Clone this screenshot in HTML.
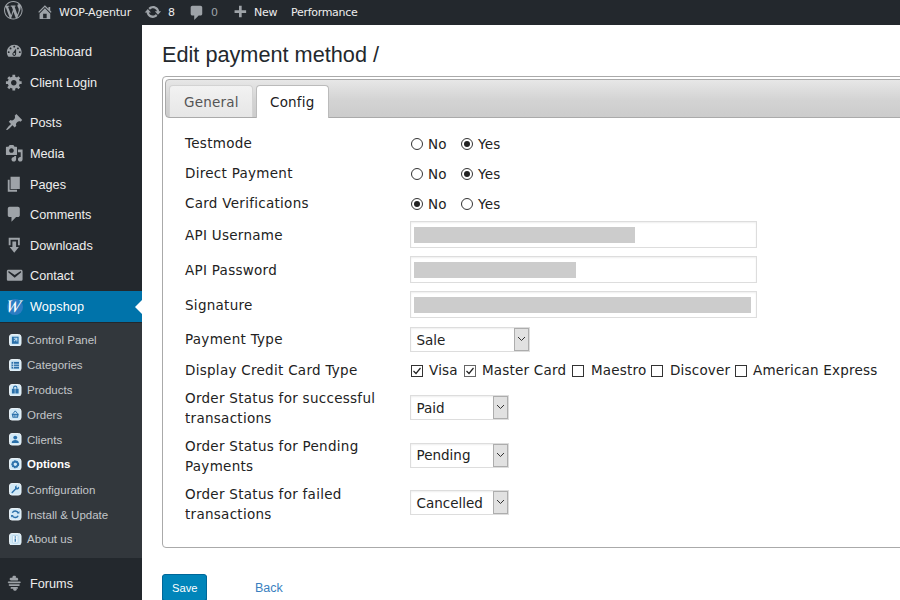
<!DOCTYPE html>
<html><head><meta charset="utf-8">
<style>
*{box-sizing:border-box;margin:0;padding:0}
html,body{width:900px;height:600px;overflow:hidden;background:#fff;font-family:"Liberation Sans",sans-serif;}
#bar{position:absolute;left:0;top:0;width:900px;height:25px;background:#23282d;color:#eee;font-family:"DejaVu Sans","Liberation Sans",sans-serif;font-size:11px;}
#bar span.t{position:absolute;top:6px;line-height:14px;white-space:nowrap;letter-spacing:-0.3px}
#bar svg{position:absolute}
#side{position:absolute;left:0;top:25px;width:142px;height:575px;background:#23282d;color:#eee;}
.mi{position:absolute;left:0;width:142px;height:31px;font-size:12.7px;color:#eee;}
.mi .l{position:absolute;left:30px;top:7px;line-height:16px;white-space:nowrap}
.mi svg{position:absolute;left:4.8px;top:5px;width:18.5px;height:18.5px;fill:#9ea3a8}
.mi.act{background:#0073aa;color:#fff}
.mi .wc{position:absolute;left:6.500px;top:7.500px;width:16px;height:16px;border-radius:50%;background:#2c7cc2}
.mi .w{position:absolute;left:5.500px;top:5px;font-family:"Liberation Serif",serif;font-style:italic;font-weight:normal;font-size:17.500px;line-height:20px;color:#fff;transform:skewX(-10deg)}
.mi.act:after{content:"";position:absolute;right:0;top:9px;border:7px solid transparent;border-right-color:#fff;border-left:0;}
#sub{position:absolute;left:0;top:298px;width:142px;height:235px;background:#32373c}
.si{position:absolute;left:0;width:142px;height:25px;font-size:11.5px;color:#c3c6c9}
.si .l{position:absolute;left:27px;top:5px;line-height:14px;white-space:nowrap}
.si .ic{position:absolute;left:9px;top:5.500px;width:12.500px;height:12.500px}
.si.cur{color:#fff;font-weight:bold}
#main{position:absolute;left:142px;top:25px;width:758px;height:574px;background:#fff}
h1{position:absolute;left:162px;top:41px;font-size:21.7px;font-weight:normal;color:#23282d;line-height:28px;white-space:nowrap}
#panel{position:absolute;left:162px;top:76px;width:760px;height:472px;border:1px solid #aaa;border-radius:4px;background:#fff}
#tabnav{position:absolute;left:2px;top:2px;width:760px;height:39px;border:1px solid #aaa;border-radius:4px;background:linear-gradient(#e7e7e7,#d3d3d3 55%,#cccccc)}
.tab{position:absolute;top:5px;height:32px;letter-spacing:.2px;border:1px solid #d3d3d3;border-bottom:0;border-radius:4px 4px 0 0;font-family:"DejaVu Sans",sans-serif;font-size:13.5px;color:#555;background:linear-gradient(#f2f2f2,#e6e6e6);}
.tab span{position:absolute;top:8px;line-height:17px;white-space:nowrap}
.tab.on{background:#fff;border-color:#bbb;color:#212121;height:33px}
.row{position:absolute;left:185px;letter-spacing:.28px;font-family:"DejaVu Sans",sans-serif;font-size:13.5px;color:#222;line-height:20px;white-space:nowrap}
.v{position:absolute;letter-spacing:.2px;font-family:"DejaVu Sans",sans-serif;font-size:13.5px;color:#222;line-height:20px;white-space:nowrap}
.rad{position:absolute;width:12px;height:12px;border:1px solid #333;border-radius:50%;background:#fff}
.rad.on:after{content:"";position:absolute;left:2px;top:2px;width:6px;height:6px;border-radius:50%;background:#222}
.inp{position:absolute;left:410px;width:347px;height:27px;border:1px solid #ddd;background:#fff;box-shadow:inset 0 1px 2px rgba(0,0,0,.07)}
.inp i{position:absolute;left:3px;top:5px;height:16px;background:#cccccc}
.sel{position:absolute;left:410px;height:25px;border:1px solid #ddd;background:#fff;box-shadow:inset 0 1px 2px rgba(0,0,0,.07)}
.sel span{position:absolute;left:5.500px;top:1.500px;font-family:"DejaVu Sans",sans-serif;font-size:13.5px;color:#222;line-height:20px}
.sel b{position:absolute;right:0;top:0;width:15px;height:23px;border:1px solid #adadad;background:#e1e1e1}
.sel b svg{position:absolute;left:2px;top:7px}
.cb{position:absolute;width:12px;height:12px;border:1px solid #333;background:#fff}
.cb svg{position:absolute;left:0;top:0}
#save{position:absolute;left:162px;top:574px;width:45px;height:27px;background:#0085ba;border:1px solid #006799;border-radius:3px;color:#fff;font-size:11.200px;box-shadow:0 1px 0 #006799}
#save span{position:absolute;left:9px;top:5.500px;line-height:14px}
#back{position:absolute;left:255px;top:580.700px;font-size:12.5px;color:#3a7fc0;line-height:14px}
</style></head><body>
<div id="main"></div>
<div id="bar">
<svg viewBox="0 0 20 20" style="left:4px;top:1.2px;width:18.6px;height:18.6px;fill:#9ea3a8"><path d="M20 10c0-5.510-4.490-10-10-10C4.480 0 0 4.490 0 10c0 5.520 4.480 10 10 10 5.510 0 10-4.480 10-10zM7.780 15.370L4.370 6.220c.55-.02 1.170-.08 1.170-.08.5-.06.44-1.130-.06-1.110 0 0-1.450.11-2.370.11-.18 0-.37 0-.58-.01C4.120 2.690 6.870 1.110 10 1.110c2.330 0 4.450.87 6.050 2.340-.68-.11-1.650.39-1.650 1.580 0 .74.450 1.360.9 2.100.35.61.55 1.360.55 2.460 0 1.490-1.400 5-1.400 5l-3.030-8.370c.54-.02.82-.17.82-.17.5-.05.44-1.250-.06-1.220 0 0-1.440.12-2.380.12-.87 0-2.330-.12-2.330-.12-.5-.03-.56 1.200-.06 1.220l.92.080 1.260 3.410zM17.410 10c.24-.64.740-1.870.43-4.250.7 1.290 1.050 2.710 1.050 4.250 0 3.290-1.730 6.240-4.400 7.780.97-2.590 1.940-5.200 2.920-7.780zM6.100 18.090C3.120 16.650 1.110 13.530 1.110 10c0-1.300.23-2.480.72-3.590C3.250 10.300 4.670 14.200 6.100 18.090zm4.030-6.630l2.580 6.980c-.86.290-1.760.450-2.710.450-.79 0-1.570-.11-2.290-.33.810-2.380 1.620-4.740 2.420-7.100z"/></svg><svg viewBox="0 0 20 20" style="left:35.8px;top:2.5px;width:17.8px;height:17.8px;fill:#9ea3a8"><path d="M16 8.500l1.530 1.530-1.060 1.060L10 4.620l-6.470 6.470-1.060-1.060L10 2.500l4 4v-2h2v4zm-6-2.460l6 5.990V18H4v-5.970zM12 17v-5H8v5h4z"/></svg><svg viewBox="0 0 20 20" style="left:144px;top:2.5px;width:17.8px;height:17.8px;fill:#9ea3a8"><path d="M10.200 3.280c3.530 0 6.430 2.610 6.920 6h2.080l-3.500 4-3.500-4h2.320c-.45-1.970-2.210-3.450-4.320-3.450-1.450 0-2.730.71-3.540 1.780L4.950 5.660C6.230 4.200 8.110 3.280 10.200 3.280zm-.4 13.440c-3.520 0-6.430-2.610-6.920-6H.8l3.500-4c1.170 1.330 2.330 2.670 3.500 4H5.480c.45 1.970 2.210 3.450 4.320 3.450 1.450 0 2.730-.71 3.540-1.780l1.710 1.950c-1.280 1.460-3.150 2.380-5.250 2.380z"/></svg><svg viewBox="0 0 20 20" style="left:188px;top:3.5px;width:17.8px;height:17.8px;fill:#9ea3a8"><path d="M5 2h9c1.100 0 2 .9 2 2v7c0 1.100-.9 2-2 2h-2l-5 5v-5H5c-1.100 0-2-.9-2-2V4c0-1.100.9-2 2-2z"/></svg><svg viewBox="0 0 20 20" style="left:231px;top:4px;width:17.8px;height:17.8px;fill:#9ea3a8"><path d="M17 7v3h-5v5H9v-5H4V7h5V2h3v5h5z"/></svg>
<span class="t" style="left:59px;letter-spacing:-.15px">WOP-Agentur</span>
<span class="t" style="left:168px">8</span>
<span class="t" style="left:211px;color:#9ea3a8">0</span>
<span class="t" style="left:254px">New</span>
<span class="t" style="left:291px">Performance</span>
</div>
<div id="side">
<div class="mi" style="top:12px"><svg viewBox="0 0 20 20"><path d="M3.76 16h12.48c1.1-1.37 1.76-3.11 1.76-5 0-4.42-3.58-8-8-8s-8 3.58-8 8c0 1.89.66 3.63 1.76 5zM10 4c.55 0 1 .45 1 1s-.45 1-1 1-1-.45-1-1 .45-1 1-1zM6 6c.55 0 1 .45 1 1s-.45 1-1 1-1-.45-1-1 .45-1 1-1zm8 0c.55 0 1 .45 1 1s-.45 1-1 1-1-.45-1-1 .45-1 1-1zm-5.37 5.55L12 7v6c0 1.1-.9 2-2 2s-2-.9-2-2c0-.57.24-1.08.63-1.450zM4 10c.55 0 1 .45 1 1s-.45 1-1 1-1-.45-1-1 .45-1 1-1zm12 0c.55 0 1 .45 1 1s-.45 1-1 1-1-.45-1-1 .45-1 1-1zm-5 3c0-.55-.45-1-1-1s-1 .45-1 1 .45 1 1 1 1-.45 1-1z"/></svg><span class="l">Dashboard</span></div>
<div class="mi" style="top:43px"><svg viewBox="0 0 20 20"><path d="M18 12h-2.18c-.17.7-.44 1.35-.81 1.93l1.54 1.54-2.1 2.1-1.54-1.54c-.58.36-1.23.63-1.91.79V19H8v-2.18c-.68-.16-1.33-.43-1.91-.79l-1.54 1.54-2.12-2.12 1.54-1.54c-.36-.58-.63-1.23-.79-1.91H1V9.03h2.17c.16-.7.44-1.35.8-1.94L2.43 5.55l2.1-2.1 1.54 1.54c.58-.37 1.24-.64 1.93-.81V2h3v2.180c.68.16 1.33.43 1.91.79l1.54-1.54 2.12 2.12-1.54 1.54c.36.59.64 1.24.8 1.94H18V12zm-8.5 1.500c1.660 0 3-1.340 3-3s-1.340-3-3-3-3 1.340-3 3 1.340 3 3 3z"/></svg><span class="l">Client Login</span></div>
<div class="mi" style="top:83px"><svg viewBox="0 0 20 20"><path d="M10.44 3.02l1.82-1.82 6.36 6.35-1.83 1.82c-1.05-.68-2.48-.57-3.41.36l-.75.75c-.92.93-1.04 2.35-.35 3.41l-1.83 1.82-2.41-2.41-2.8 2.790c-.42.42-3.38 2.71-3.8 2.290s1.860-3.390 2.280-3.810l2.790-2.790L4.100 9.360l1.830-1.820c1.050.69 2.480.57 3.400-.36l.75-.75c.93-.92 1.050-2.350.36-3.410z"/></svg><span class="l">Posts</span></div>
<div class="mi" style="top:114px"><svg viewBox="0 0 20 20"><path d="M13 11V4c0-.55-.45-1-1-1h-1.670L9 1H5L3.670 3H2c-.55 0-1 .45-1 1v7c0 .55.45 1 1 1h10c.55 0 1-.45 1-1zM7 4.500c1.380 0 2.500 1.120 2.500 2.500S8.380 9.500 7 9.500 4.500 8.380 4.500 7 5.620 4.500 7 4.500zM14 6h5v10.500c0 1.380-1.120 2.500-2.500 2.500S14 17.880 14 16.500s1.120-2.500 2.500-2.500c.17 0 .34.020.5.050V9h-3V6zm-4 8.050V13h2v3.500c0 1.380-1.120 2.500-2.500 2.500S7 17.880 7 16.500 8.120 14 9.500 14c.17 0 .34.020.5.050z"/></svg><span class="l">Media</span></div>
<div class="mi" style="top:145px"><svg viewBox="0 0 20 20"><path d="M6 15V2h10v13H6zm-1 1h8v2H3V5h2v11z"/></svg><span class="l">Pages</span></div>
<div class="mi" style="top:175px"><svg viewBox="0 0 20 20"><path d="M5 2h9c1.100 0 2 .9 2 2v7c0 1.100-.9 2-2 2h-2l-5 5v-5H5c-1.100 0-2-.9-2-2V4c0-1.100.9-2 2-2z"/></svg><span class="l">Comments</span></div>
<div class="mi" style="top:206px"><svg viewBox="0 0 20 20"><path d="M14.010 4v6h2V2H4v8h2.010V4h8zm-2 2v6h3l-5 6-5-6h3V6h4z"/></svg><span class="l">Downloads</span></div>
<div class="mi" style="top:236px"><svg viewBox="0 0 20 20"><path d="M3.870 4h13.250C18.370 4 19 4.590 19 5.790v8.420c0 1.190-.63 1.790-1.880 1.790H3.870c-1.250 0-1.880-.6-1.880-1.790V5.790c0-1.200.63-1.790 1.880-1.790zm6.620 8.600l6.740-5.530c.24-.2.430-.66.130-1.070-.29-.41-.82-.42-1.170-.17l-5.700 3.860L4.800 5.830c-.35-.25-.88-.24-1.170.17-.3.410-.11.870.13 1.070l6.730 5.530z"/></svg><span class="l">Contact</span></div>
<div class="mi act" style="top:266px"><i class="wc"></i><span class="w">W</span><span class="l" style="top:8px;letter-spacing:.12px">Wopshop</span></div>
<div id="sub">
<div class="si" style="top:5px"><svg class="ic" viewBox="0 0 13 13"><rect x=".5" y=".5" width="12" height="12" rx="2.6" fill="#d2e9f6" stroke="#eef7fc"/><rect x="3" y="2.8" width="7" height="7.4" fill="#2a70aa"/><path d="M5 4.5h3.200v3.200M8 4.700L5.200 7.500" stroke="#bcdcf0" stroke-width="1.100" fill="none"/></svg><span class="l">Control Panel</span></div>
<div class="si" style="top:30px"><svg class="ic" viewBox="0 0 13 13"><rect x=".5" y=".5" width="12" height="12" rx="2.6" fill="#d2e9f6" stroke="#eef7fc"/><rect x="2.600" y="3" width="7.800" height="7" fill="#2a70aa"/><path d="M2.600 5.400h7.800M2.600 7.700h7.800M4.700 3v7" stroke="#d2e9f6" stroke-width=".8"/></svg><span class="l">Categories</span></div>
<div class="si" style="top:55px"><svg class="ic" viewBox="0 0 13 13"><rect x=".5" y=".5" width="12" height="12" rx="2.6" fill="#d2e9f6" stroke="#eef7fc"/><path d="M3 5h3v5H3zM6.600 5H10v5H6.600z" fill="#2a70aa"/><path d="M4.800 5V3.600a1.700 1.400 0 0 1 3.400 0V5" stroke="#2a70aa" stroke-width="1.100" fill="none"/></svg><span class="l">Products</span></div>
<div class="si" style="top:79.5px"><svg class="ic" viewBox="0 0 13 13"><rect x=".5" y=".5" width="12" height="12" rx="2.6" fill="#d2e9f6" stroke="#eef7fc"/><path d="M2.800 6h7.400l-.9 4.200H3.700z" fill="#2a70aa"/><path d="M4 6l2.500-3L9 6" stroke="#2a70aa" stroke-width="1" fill="none"/><path d="M5 7.200v2M6.500 7.200v2M8 7.200v2" stroke="#d2e9f6" stroke-width=".7"/></svg><span class="l">Orders</span></div>
<div class="si" style="top:104.5px"><svg class="ic" viewBox="0 0 13 13"><rect x=".5" y=".5" width="12" height="12" rx="2.6" fill="#d2e9f6" stroke="#eef7fc"/><circle cx="6.500" cy="4.800" r="2" fill="#2a70aa"/><path d="M2.800 10.300c0-2.200 1.500-3 3.700-3s3.700.8 3.700 3z" fill="#2a70aa"/></svg><span class="l">Clients</span></div>
<div class="si cur" style="top:129.25px"><svg class="ic" viewBox="0 0 13 13"><rect x=".5" y=".5" width="12" height="12" rx="2.6" fill="#d2e9f6" stroke="#eef7fc"/><circle cx="6.500" cy="6.500" r="3" fill="none" stroke="#2a70aa" stroke-width="2.200" stroke-dasharray="1.600 .5"/><circle cx="6.500" cy="6.500" r="2.600" fill="none" stroke="#2a70aa" stroke-width="1.400"/></svg><span class="l">Options</span></div>
<div class="si" style="top:154.5px"><svg class="ic" viewBox="0 0 13 13"><rect x=".5" y=".5" width="12" height="12" rx="2.6" fill="#d2e9f6" stroke="#eef7fc"/><path d="M3.300 9.900L7.300 5.800" stroke="#2a70aa" stroke-width="1.500" stroke-linecap="round"/><path d="M10.200 3.700a2.100 2.100 0 1 1-1.900-1.100L7.600 4.200l1.200 1z" fill="#2a70aa"/></svg><span class="l">Configuration</span></div>
<div class="si" style="top:179.5px"><svg class="ic" viewBox="0 0 13 13"><rect x=".5" y=".5" width="12" height="12" rx="2.6" fill="#d2e9f6" stroke="#eef7fc"/><path d="M9.600 5.200A3.300 3.300 0 0 0 3.500 5" stroke="#2a70aa" stroke-width="1.500" fill="none"/><path d="M3.400 7.800A3.300 3.300 0 0 0 9.500 8" stroke="#2a70aa" stroke-width="1.500" fill="none"/><path d="M8.300 5.700h2.500V3.200zM4.700 7.300H2.200v2.500z" fill="#2a70aa"/></svg><span class="l">Install &amp; Update</span></div>
<div class="si" style="top:204px"><svg class="ic" viewBox="0 0 13 13"><rect x=".5" y=".5" width="12" height="12" rx="2.6" fill="#d2e9f6" stroke="#eef7fc"/><rect x="3.600" y="2.600" width="5.800" height="7.800" rx=".8" fill="#eef7fc" stroke="#9fc6df" stroke-width=".6"/><path d="M6.500 5.600v3.600" stroke="#2a70aa" stroke-width="1.300"/><circle cx="6.500" cy="4.100" r=".75" fill="#2a70aa"/></svg><span class="l">About us</span></div>
</div>
<div class="mi" style="top:544px"><svg viewBox="0 0 20 20"><path d="M13.500 7h-7C5.670 7 5 6.330 5 5.500S5.670 4 6.500 4h1.590C8.040 3.840 8 3.680 8 3.500 8 2.670 8.670 2 9.500 2h1c.83 0 1.500.67 1.500 1.500 0 .18-.4.340-.9.500h1.590c.83 0 1.500.67 1.500 1.500S14.330 7 13.500 7zM4 8h12c.55 0 1 .45 1 1s-.45 1-1 1H4c-.55 0-1-.45-1-1s.45-1 1-1zm1 3h10c.55 0 1 .45 1 1s-.45 1-1 1H5c-.55 0-1-.45-1-1s.45-1 1-1zm2 3h6c.55 0 1 .45 1 1s-.45 1-1 1h-1.090c.5.160.9.320.9.500 0 .83-.67 1.500-1.500 1.500h-1c-.83 0-1.500-.67-1.500-1.500 0-.18.040-.34.090-.5H7c-.55 0-1-.45-1-1s.45-1 1-1z"/></svg><span class="l">Forums</span></div>
</div>
<h1>Edit payment method /</h1>
<div id="panel">
<div id="tabnav">
<div class="tab" style="left:3px;width:84px"><span style="left:14px">General</span></div>
<div class="tab on" style="left:90px;width:73px"><span style="left:13px">Config</span></div>
</div>
</div>
<div class="row" style="top:133px">Testmode</div>
<div class="row" style="top:163px">Direct Payment</div>
<div class="row" style="top:192.700px">Card Verifications</div>
<div class="row" style="top:225px">API Username</div>
<div class="row" style="top:260px">API Password</div>
<div class="row" style="top:295px">Signature</div>
<div class="row" style="top:329px">Payment Type</div>
<div class="row" style="top:360px">Display Credit Card Type</div>
<div class="row" style="top:388px">Order Status for successful<br>transactions</div>
<div class="row" style="top:435.600px">Order Status for Pending<br>Payments</div>
<div class="row" style="top:483.600px">Order Status for failed<br>transactions</div>

<div class="rad" style="left:411px;top:138px"></div><div class="v" style="left:428px;top:134px">No</div>
<div class="rad on" style="left:461px;top:138px"></div><div class="v" style="left:478px;top:134px">Yes</div>
<div class="rad" style="left:411px;top:168px"></div><div class="v" style="left:428px;top:164px">No</div>
<div class="rad on" style="left:461px;top:168px"></div><div class="v" style="left:478px;top:164px">Yes</div>
<div class="rad on" style="left:411px;top:197.600px"></div><div class="v" style="left:428px;top:193.600px">No</div>
<div class="rad" style="left:461px;top:197.600px"></div><div class="v" style="left:478px;top:193.600px">Yes</div>

<div class="inp" style="top:221px"><i style="width:221px"></i></div>
<div class="inp" style="top:256px"><i style="width:162px"></i></div>
<div class="inp" style="top:291px"><i style="width:337px"></i></div>

<div class="sel" style="top:327px;width:120px"><span>Sale</span><b><svg width="9" height="6" viewBox="0 0 9 6"><path d="M1 1l3.5 3.5L8 1" fill="none" stroke="#333" stroke-width="1"/></svg></b></div>
<div class="sel" style="top:395px;width:99px"><span>Paid</span><b><svg width="9" height="6" viewBox="0 0 9 6"><path d="M1 1l3.5 3.5L8 1" fill="none" stroke="#333" stroke-width="1"/></svg></b></div>
<div class="sel" style="top:442.500px;width:99px"><span>Pending</span><b><svg width="9" height="6" viewBox="0 0 9 6"><path d="M1 1l3.5 3.5L8 1" fill="none" stroke="#333" stroke-width="1"/></svg></b></div>
<div class="sel" style="top:490px;width:99px"><span>Cancelled</span><b><svg width="9" height="6" viewBox="0 0 9 6"><path d="M1 1l3.5 3.5L8 1" fill="none" stroke="#333" stroke-width="1"/></svg></b></div>

<div class="cb" style="left:411px;top:365px"><svg width="10" height="10" viewBox="0 0 10 10"><path d="M1.5 5l2.5 2.5L8.5 2" fill="none" stroke="#222" stroke-width="1.2"/></svg></div><div class="v" style="left:429px;top:360px">Visa</div>
<div class="cb" style="left:464px;top:365px;outline:1px dotted #666;outline-offset:-1px;border-color:#666"><svg width="10" height="10" viewBox="0 0 10 10"><path d="M1.5 5l2.5 2.5L8.5 2" fill="none" stroke="#222" stroke-width="1.2"/></svg></div><div class="v" style="left:482px;top:360px">Master Card</div>
<div class="cb" style="left:572px;top:365px"></div><div class="v" style="left:591px;top:360px">Maestro</div>
<div class="cb" style="left:651px;top:365px"></div><div class="v" style="left:670px;top:360px">Discover</div>
<div class="cb" style="left:735px;top:365px"></div><div class="v" style="left:753px;top:360px">American Express</div>

<div id="save"><span>Save</span></div>
<div id="back">Back</div>
</body></html>
